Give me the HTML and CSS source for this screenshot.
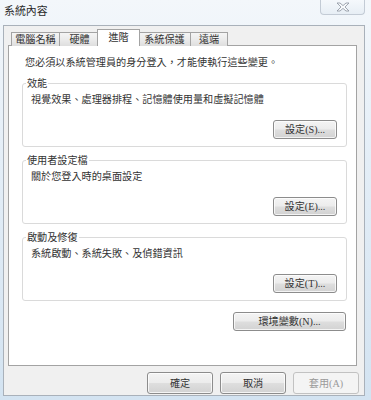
FILE: index.html
```html
<!DOCTYPE html>
<html lang="zh-Hant">
<head>
<meta charset="utf-8">
<title>系統內容</title>
<link rel="stylesheet" href="styles.css">
</head>
<body>
<div class="window">
  <div class="titlebar">
    <span class="title">系統內容</span>
    <div class="close">
      <svg width="14" height="10" viewBox="0 0 14 10"><polygon points="1,1 4,1 7,3.6 10,1 13,1 9,5 13,9 10,9 7,6.4 4,9 1,9 5,5" fill="#f7f9fb" stroke="#8a929e" stroke-width="0.8" stroke-linejoin="round"/></svg>
    </div>
  </div>
  <div class="client">
    <div class="tabs">
      <div class="tab w1">電腦名稱</div>
      <div class="tab w2">硬體</div>
      <div class="tab w3 active">進階</div>
      <div class="tab w4">系統保護</div>
      <div class="tab w5">遠端</div>
    </div>
    <div class="panel">
      <p class="intro">您必須以系統管理員的身分登入，才能使執行這些變更。</p>
      <div class="group">
        <span class="legend">效能</span>
        <p class="desc">視覺效果、處理器排程、記憶體使用量和虛擬記憶體</p>
        <div class="btnrow"><button class="btn">設定(S)...</button></div>
      </div>
      <div class="group">
        <span class="legend">使用者設定檔</span>
        <p class="desc">關於您登入時的桌面設定</p>
        <div class="btnrow"><button class="btn">設定(E)...</button></div>
      </div>
      <div class="group">
        <span class="legend">啟動及修復</span>
        <p class="desc">系統啟動、系統失敗、及偵錯資訊</p>
        <div class="btnrow"><button class="btn">設定(T)...</button></div>
      </div>
      <div class="envrow"><button class="btn wide">環境變數(N)...</button></div>
    </div>
    <div class="footer">
      <button class="btn big">確定</button>
      <button class="btn big">取消</button>
      <button class="btn big disabled">套用(A)</button>
    </div>
  </div>
</div>
</body>
</html>
```

FILE: styles.css
```css
* { box-sizing: border-box; }
html, body { margin: 0; padding: 0; }
body {
  width: 371px;
  height: 400px;
  overflow: hidden;
  font-family: "Liberation Serif", "Noto Sans CJK TC", sans-serif;
  font-size: 10.15px;
  color: #333;
}
.window {
  width: 371px;
  height: 400px;
  background: linear-gradient(180deg, #f3f7fb 0%, #e4eef7 40%, #d3e3f1 100%);
  padding: 0 6px 4px 3px;
  display: flex;
  flex-direction: column;
}
.titlebar {
  height: 25px;
  display: flex;
  justify-content: space-between;
  align-items: flex-start;
}
.title {
  font-family: "Noto Sans CJK TC", sans-serif;
  font-size: 10.9px;
  color: #2a2a2a;
  margin: 3px 0 0 1px;
  line-height: 14px;
}
.close {
  width: 45px;
  height: 16px;
  margin-top: -1px;
  border: 1px solid #c3cbd5;
  border-top: none;
  border-radius: 0 0 4px 4px;
  background: linear-gradient(180deg, #f6f9fc, #e7eef5);
  display: flex;
  align-items: center;
  justify-content: center;
}
.client {
  flex: 1;
  background: #f0f0f0;
  border: 1px solid #a9b1ba;
  padding: 3px 5px 0 4px;
  display: flex;
  flex-direction: column;
}
.tabs {
  display: flex;
  align-items: flex-end;
  height: 16px;
  margin-left: 3px;
  position: relative;
  z-index: 2;
}
.tab {
  height: 14px;
  margin-bottom: -1px;
  border: 1px solid #a3a3a3;
  border-bottom: none;
  border-right: none;
  background: linear-gradient(180deg, #f5f5f5 0%, #ebebeb 50%, #dedede 100%);
  text-align: center;
  line-height: 12px;
  font-family: "Noto Sans CJK TC", sans-serif;
  white-space: nowrap;
}
.tab.w5 { border-right: 1px solid #a3a3a3; }
.w1 { width: 48px; }
.w2 { width: 40px; }
.w3 { width: 39px; }
.w4 { width: 52px; border-left: 1px solid #a3a3a3; }
.w5 { width: 38px; }
.tab.active {
  width: 43px;
  height: 17px;
  margin: 0 -2px -1px -2px;
  background: #fff;
  border-right: 1px solid #a3a3a3;
  position: relative;
  z-index: 3;
  line-height: 14px;
}
.panel {
  width: 349px;
  height: 321px;
  background: #fff;
  border: 1px solid #a3a3a3;
  padding: 9px 9px 0 13px;
  position: relative;
  z-index: 1;
}
.intro {
  margin: 0;
  padding-left: 3px;
  line-height: 14px;
  font-family: "Noto Sans CJK TC", sans-serif;
}
.group {
  margin-top: 13px;
  width: 325px;
  height: 64px;
  border: 1px solid #dadada;
  border-radius: 3px;
  padding: 0 9px 0 8px;
  display: flex;
  flex-direction: column;
}
.group:first-of-type { margin-top: 14px; }
.legend {
  align-self: flex-start;
  margin: -8px 0 0 -5px;
  padding: 0 1px;
  background: #fff;
  line-height: 14px;
  font-family: "Noto Sans CJK TC", sans-serif;
}
.desc {
  margin: 2px 0 0 0;
  line-height: 14px;
  font-family: "Noto Sans CJK TC", sans-serif;
}
.btnrow {
  margin-top: 14px;
  display: flex;
  justify-content: flex-end;
}
.btn {
  font-family: "Liberation Serif", "Noto Sans CJK TC", sans-serif;
  font-size: 10.15px;
  color: #333;
  width: 64px;
  height: 19px;
  padding: 0;
  border: 1px solid #8c8c8c;
  border-radius: 3px;
  background: linear-gradient(180deg, #f4f4f4 0%, #ececec 48%, #dedede 52%, #d2d2d2 100%);
  box-shadow: inset 0 0 0 1px rgba(255,255,255,0.75);
  line-height: 15px;
  text-align: center;
}
.envrow {
  margin-top: 11px;
  display: flex;
  justify-content: flex-end;
  width: 324px;
}
.btn.wide { width: 113px; }
.footer {
  margin-top: 6px;
  display: flex;
  justify-content: flex-end;
  gap: 7px;
  padding-right: 0;
}
.btn.big { width: 66px; height: 22px; }
.btn.disabled {
  color: #9a9a9a;
  border-color: #c2c2c2;
  background: #f4f4f4;
  box-shadow: none;
}
```
